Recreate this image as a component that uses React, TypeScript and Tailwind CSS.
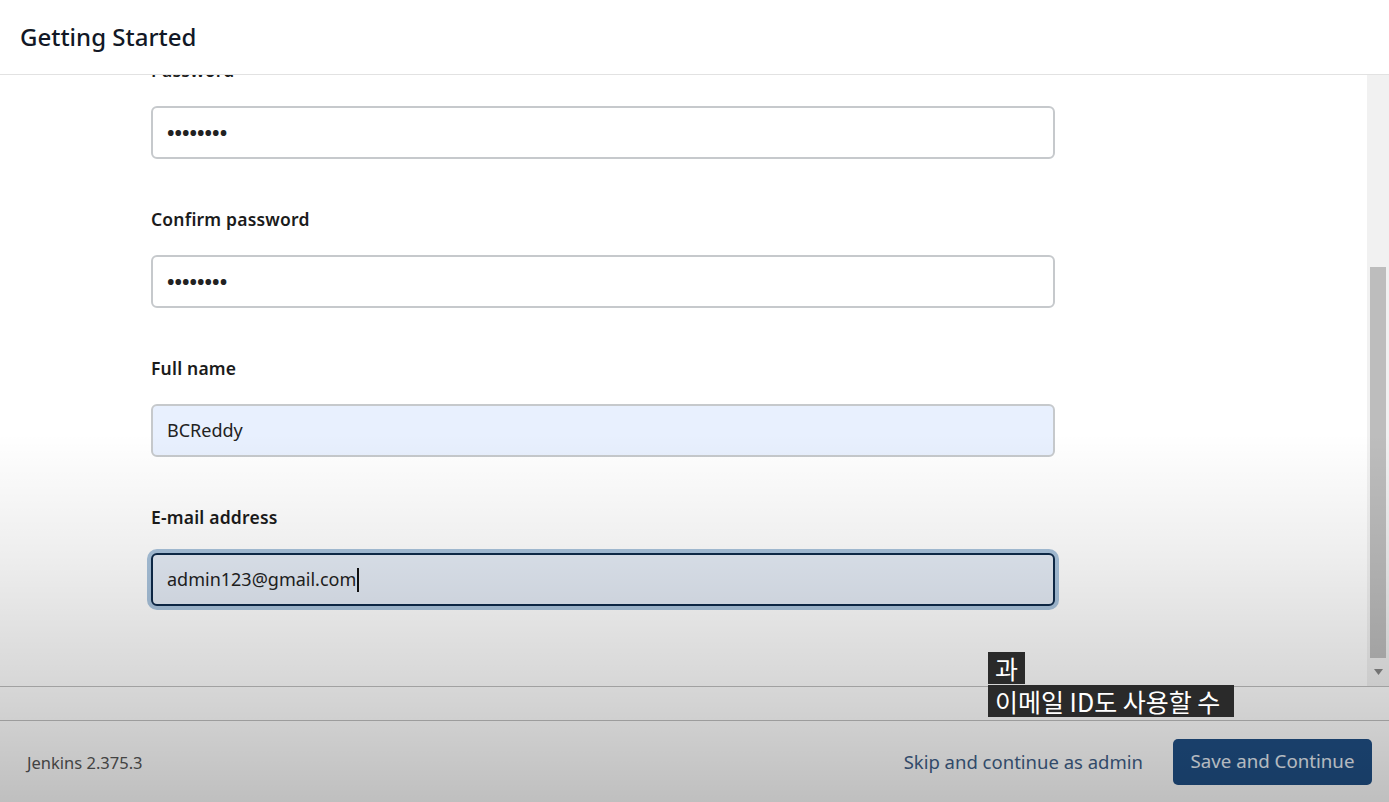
import React from 'react'

const font = { fontFamily: '"Noto Sans", "Open Sans", sans-serif' }

function Field({ label, value, type = 'text', variant = 'plain' }: { label: string; value: string; type?: string; variant?: 'plain' | 'filled' | 'focus' }) {
  const base = 'w-[904px] h-[53px] rounded-[6px] px-[14px] text-[18px] text-[#222] outline-none'
  const cls =
    variant === 'focus'
      ? `${base} border-2 border-[#0e2a4a] bg-[#e4ebf5] ring-[4px] ring-[#a9c3dc]`
      : variant === 'filled'
      ? `${base} border-2 border-[#c6c9cc] bg-[#e8f0fe]`
      : `${base} border-2 border-[#c6c9cc] bg-white`
  return (
    <div className="flex flex-col">
      <label className="h-[24px] text-[17.5px] leading-[20px] font-semibold text-[#1b1b1b] tracking-[0.2px]">{label}</label>
      <div className="mt-[22px]">
        {type === 'password' ? (
          <div className={`${cls} flex items-center`}>
            <span className="text-[20px] tracking-[0px] leading-none font-bold">{value}</span>
          </div>
        ) : (
          <div className={`${cls} flex items-center`}>
            <span>{value}</span>
            {variant === 'focus' && <span className="w-[2px] h-[24px] bg-[#111] ml-[1px]" />}
          </div>
        )}
      </div>
    </div>
  )
}

export default function App() {
  return (
    <div className="relative h-screen w-full flex flex-col bg-white overflow-hidden" style={font}>
      <header className="h-[75px] shrink-0 flex items-center px-[20px] border-b border-[#e2e2e2] bg-white relative z-10">
        <h1 className="text-[24px] font-medium text-[#121826]">Getting Started</h1>
      </header>

      <div className="flex-1 flex overflow-hidden">
        <main className="flex-1 overflow-hidden pl-[151px]">
          <div className="-mt-[15px] flex flex-col gap-[50px]">
            <Field label="Password" value="••••••••" type="password" />
            <Field label="Confirm password" value="••••••••" type="password" />
            <Field label="Full name" value="BCReddy" variant="filled" />
            <Field label="E-mail address" value="admin123@gmail.com" variant="focus" />
          </div>
        </main>
        <div className="w-[22px] shrink-0 bg-[#f1f1f1] flex flex-col pt-[192px]">
          <div className="mx-[3px] h-[391px] bg-[#bdbdbd]" />
          <div className="flex-1 flex items-center justify-center">
            <svg width="9" height="6" viewBox="0 0 9 6"><path d="M0 0h9L4.5 6z" fill="#888" /></svg>
          </div>
        </div>
      </div>

      <div className="h-[35px] shrink-0 border-t border-b border-[#bfbfbf]" />

      <footer className="h-[81px] shrink-0 flex items-center justify-between pl-[27px] pr-[17px]">
        <span className="text-[16.5px] text-[#555] mt-[4px]">Jenkins 2.375.3</span>
        <div className="flex items-center gap-[30px]">
          <a className="text-[18.5px] text-[#3f5f88]">Skip and continue as admin</a>
          <button className="w-[199px] h-[46px] rounded-[5px] bg-[#1f4f85] text-[18.7px] text-[#e6edf5]">Save and Continue</button>
        </div>
      </footer>

      <div className="pointer-events-none absolute inset-0 bg-[linear-gradient(to_bottom,rgba(0,0,0,0)_0%,rgba(0,0,0,0)_54%,rgba(0,0,0,0.07)_70%,rgba(0,0,0,0.16)_86%,rgba(0,0,0,0.25)_100%)]" />

      <div className="absolute left-[988px] top-[652px] flex flex-col items-start text-white text-[25px] leading-[32px]" style={{ fontFamily: '"Noto Sans CJK KR", "Noto Sans", sans-serif' }}>
        <span className="bg-[#2a2a2a] px-[7px]">과</span>
        <span className="bg-[#2a2a2a] pl-[7px] pr-[14px] mt-[1px]">이메일 ID도 사용할 수</span>
      </div>
    </div>
  )
}
